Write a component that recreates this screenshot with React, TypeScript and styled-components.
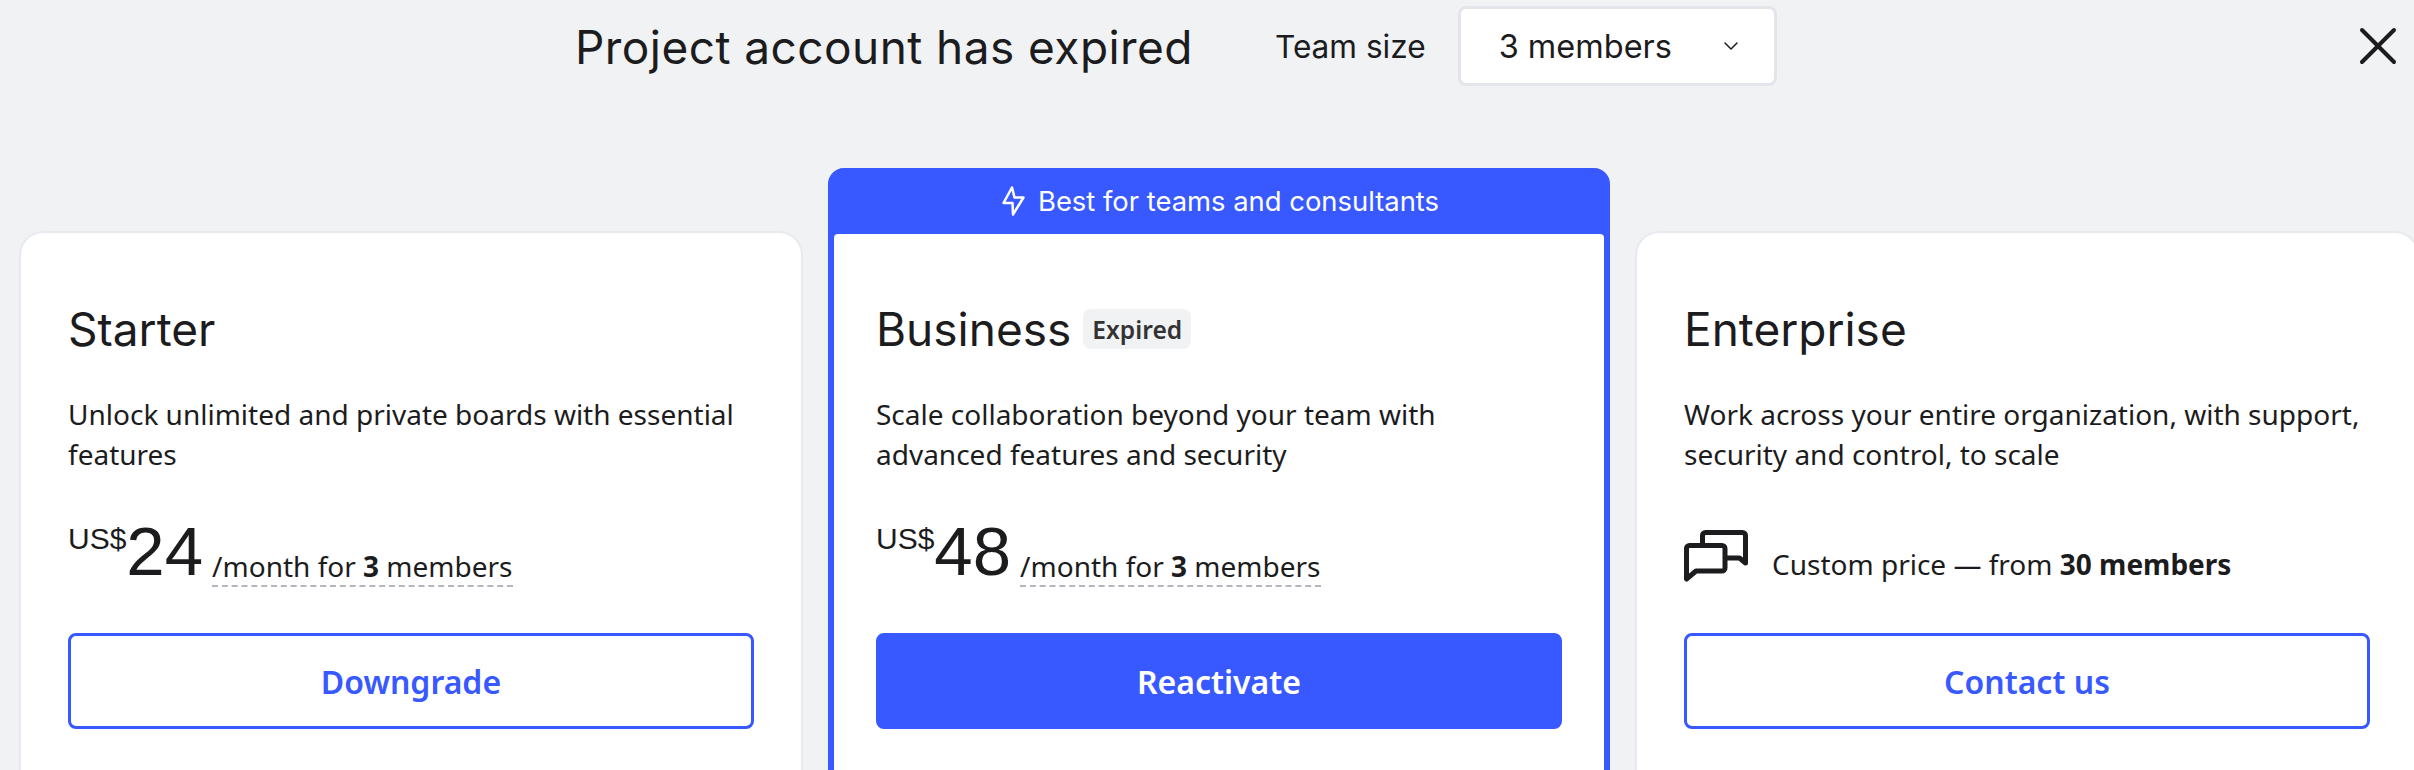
import React from "react";
import styled, { createGlobalStyle } from "styled-components";
import { ChevronDown, X } from "lucide-react";

const GlobalStyle = createGlobalStyle`
  html, body {
    margin: 0;
    height: 100%;
    background: #f1f2f4;
    overflow: hidden;
  }
`;

const headingFont = `"Inter", "Liberation Sans", sans-serif`;
const bodyFont = `"Noto Sans", "Open Sans", sans-serif`;
const priceFont = `"Liberation Sans", sans-serif`;
const blue = "#3859ff";
const ink = "#1c1c1e";

const Page = styled.div`
  width: 2414px;
  height: 770px;
  overflow: hidden;
  color: ${ink};
  font-family: ${bodyFont};
`;

const Header = styled.header`
  display: flex;
  align-items: center;
  height: 92px;
  padding: 0 4px 0 575px;
`;

const Title = styled.h1`
  margin: 2px 0 0;
  font-family: ${headingFont};
  font-size: 46px;
  font-weight: 400;
  letter-spacing: 0.44px;
  white-space: nowrap;
`;

const TeamLabel = styled.span`
  margin-left: 82px;
  font-family: ${headingFont};
  font-size: 31.6px;
`;

const Select = styled.div`
  display: flex;
  align-items: center;
  justify-content: space-between;
  box-sizing: border-box;
  width: 319px;
  height: 80px;
  margin-left: 32px;
  padding: 0 31px 0 38px;
  background: #fff;
  border: 3px solid #e4e5eb;
  border-radius: 8px;
  font-family: ${headingFont};
  font-size: 32.5px;
`;

const CloseButton = styled.button`
  display: flex;
  margin-left: auto;
  padding: 0;
  border: 0;
  background: none;
  color: ${ink};
`;

const Plans = styled.div`
  display: flex;
  align-items: flex-start;
  gap: 25px;
  padding: 76px 0 0 19px;
`;

const Card = styled.section`
  flex: none;
  box-sizing: border-box;
  width: 784px;
  height: 540px;
  margin-top: 63px;
  padding: 69px 47px 0;
  background: #fff;
  border: 2px solid #e9eaef;
  border-bottom: 0;
  border-radius: 24px 24px 0 0;
`;

const FeaturedCard = styled.section`
  flex: none;
  box-sizing: border-box;
  width: 782px;
  height: 602px;
  background: ${blue};
  border: 6px solid ${blue};
  border-bottom: 0;
  border-top: 0;
  border-radius: 16px 16px 0 0;
`;

const Ribbon = styled.div`
  display: flex;
  align-items: center;
  justify-content: center;
  gap: 13px;
  height: 66px;
  padding-left: 3px;
  color: #fff;
  font-family: ${headingFont};
  font-size: 27.4px;
`;

const FeaturedBody = styled.div`
  height: 536px;
  padding: 68px 42px 0;
  background: #fff;
  border-radius: 4px 4px 0 0;
`;

const PlanName = styled.h2`
  display: flex;
  align-items: center;
  gap: 12px;
  margin: 0;
  height: 54px;
  font-family: ${headingFont};
  font-size: 46px;
  font-weight: 400;
`;

const Badge = styled.span`
  display: flex;
  align-items: center;
  justify-content: center;
  width: 108px;
  height: 40px;
  background: #f1f2f4;
  border-radius: 8px;
  font-family: ${bodyFont};
  font-size: 24.6px;
  font-weight: 600;
  color: #333;
`;

const Description = styled.p`
  margin: 38px 0 0;
  font-size: 28px;
  line-height: 40px;
`;

const PriceRow = styled.div`
  display: flex;
  align-items: flex-end;
  height: 80px;
  margin-top: 34px;
`;

const Currency = styled.span`
  align-self: flex-start;
  margin-top: 14px;
  font-family: ${priceFont};
  font-size: 30px;
`;

const Amount = styled.span`
  font-family: ${priceFont};
  font-size: 69px;
  line-height: 72px;
`;

const Period = styled.span`
  margin: 0 0 1px 9px;
  font-size: 28px;
  line-height: 38px;
  border-bottom: 2px dashed #b5b6bd;
`;

const CustomRow = styled.div`
  display: flex;
  align-items: center;
  gap: 24px;
  height: 64px;
  margin-top: 50px;
  font-size: 28px;
`;

const CustomText = styled.span`
  margin-top: 16px;
`;

const ActionButton = styled.button<{ $primary?: boolean }>`
  display: block;
  box-sizing: border-box;
  width: 100%;
  height: 96px;
  margin-top: 45px;
  background: ${(p) => (p.$primary ? blue : "#fff")};
  border: 3px solid ${blue};
  border-radius: 8px;
  color: ${(p) => (p.$primary ? "#fff" : blue)};
  font-family: ${bodyFont};
  font-size: 32px;
  font-weight: 600;
`;

const BoltIcon = () => (
  <svg width="23" height="30" viewBox="0 0 23 30" fill="none" stroke="#fff" strokeWidth="2.5" strokeLinejoin="round">
    <path d="M10 1.5 1.5 17h9l.5 11.5L21.5 11.5H12.5z" />
  </svg>
);

const ChatIcon = () => (
  <svg width="64" height="53" viewBox="0 0 64 53" fill="none" stroke={ink} strokeWidth="5" strokeLinejoin="round">
    <path d="M18.5 13V5.5a3 3 0 0 1 3-3h37a3 3 0 0 1 3 3V33l-6-5H43" />
    <path d="M5.5 15.5H38a3 3 0 0 1 3 3V38a3 3 0 0 1-3 3H12l-9.5 8V18.5a3 3 0 0 1 3-3z" />
  </svg>
);

const Price = ({ value }: { value: string }) => (
  <PriceRow>
    <Currency>US$</Currency>
    <Amount>{value}</Amount>
    <Period>
      /month for <b>3</b> members
    </Period>
  </PriceRow>
);

export default function App() {
  return (
    <Page>
      <GlobalStyle />
      <Header>
        <Title>Project account has expired</Title>
        <TeamLabel>Team size</TeamLabel>
        <Select>
          3 members
          <ChevronDown size={24} strokeWidth={1.5} />
        </Select>
        <CloseButton>
          <X size={64} strokeWidth={1.5} />
        </CloseButton>
      </Header>
      <Plans>
        <Card>
          <PlanName>Starter</PlanName>
          <Description>
            Unlock unlimited and private boards with essential features
          </Description>
          <Price value="24" />
          <ActionButton>Downgrade</ActionButton>
        </Card>
        <FeaturedCard>
          <Ribbon>
            <BoltIcon />
            Best for teams and consultants
          </Ribbon>
          <FeaturedBody>
            <PlanName>
              Business <Badge>Expired</Badge>
            </PlanName>
            <Description>
              Scale collaboration beyond your team with advanced features and
              security
            </Description>
            <Price value="48" />
            <ActionButton $primary>Reactivate</ActionButton>
          </FeaturedBody>
        </FeaturedCard>
        <Card>
          <PlanName>Enterprise</PlanName>
          <Description>
            Work across your entire organization, with support, security and
            control, to scale
          </Description>
          <CustomRow>
            <ChatIcon />
            <CustomText>
              Custom price — from <b>30 members</b>
            </CustomText>
          </CustomRow>
          <ActionButton>Contact us</ActionButton>
        </Card>
      </Plans>
    </Page>
  );
}
